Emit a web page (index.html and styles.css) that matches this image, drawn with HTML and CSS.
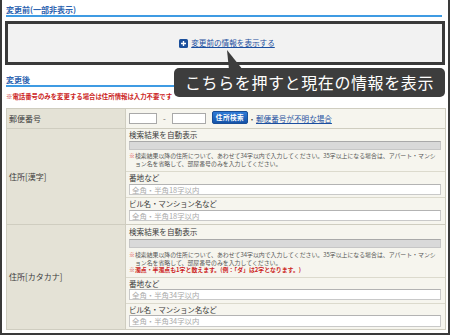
FILE: index.html
```html
<!DOCTYPE html>
<html lang="ja">
<head>
<meta charset="utf-8">
<title>変更フォーム</title>
<link rel="stylesheet" href="styles.css">
</head>
<body>
<div class="frame">
  <h2 class="sec">変更前(一部非表示)</h2>
  <div class="prev-box">
    <a class="show-link" href="#"><svg class="plus" width="9" height="9" viewBox="0 0 9 9"><rect width="9" height="9" rx="1.5" fill="#1b4f9b"/><path d="M4.5 2v5M2 4.5h5" stroke="#fff" stroke-width="1.4"/></svg><span class="show-text">変更前の情報を表示する</span></a>
  </div>
  <h2 class="sec sec-after">変更後</h2>
  <p class="warn">※電話番号のみを変更する場合は住所情報は入力不要です</p>
  <table class="form">
    <colgroup><col class="c1"><col></colgroup>
    <tr>
      <td class="label">郵便番号</td>
      <td class="val">
        <div class="zip">
          <input class="zin z1" type="text"><span class="dash">-</span><input class="zin z2" type="text"><button class="zbtn" type="button">住所検索</button><span class="dot">・</span><a class="zlink" href="#">郵便番号が不明な場合</a>
        </div>
      </td>
    </tr>
    <tr>
      <td class="label">住所[漢字]</td>
      <td class="val">
        <div class="sub s-auto">
          <div class="cap">検索結果を自動表示</div>
          <div class="bar"></div>
          <div class="note"><span class="ln"><span class="mk">※</span>検索結果以降の住所について、あわせて34字以内で入力してください。35字以上になる場合は、アパート・マンシ</span><span class="ln ln2">ョン名を省略して、部屋番号のみを入力してください。</span></div>
        </div>
        <div class="sub s-in">
          <div class="cap">番地など</div>
          <input class="txt" type="text" placeholder="全角・半角18字以内">
        </div>
        <div class="sub s-in s-last">
          <div class="cap cap-bld">ビル名・マンション名など</div>
          <input class="txt" type="text" placeholder="全角・半角18字以内">
        </div>
      </td>
    </tr>
    <tr>
      <td class="label">住所[カタカナ]</td>
      <td class="val">
        <div class="sub s-auto2">
          <div class="cap">検索結果を自動表示</div>
          <div class="bar"></div>
          <div class="note note3"><span class="ln"><span class="mk">※</span>検索結果以降の住所について、あわせて34字以内で入力してください。35字以上になる場合は、アパート・マンシ</span><span class="ln ln2">ョン名を省略して、部屋番号のみを入力してください。</span><span class="ln red">※濁点・半濁点も1字と数えます。(例：「ダ」は2字となります。)</span></div>
        </div>
        <div class="sub s-in2">
          <div class="cap">番地など</div>
          <input class="txt" type="text" placeholder="全角・半角34字以内">
        </div>
        <div class="sub s-in3">
          <div class="cap cap-bld">ビル名・マンション名など</div>
          <input class="txt txt-tall" type="text" placeholder="全角・半角34字以内">
        </div>
      </td>
    </tr>
  </table>

  <svg class="tip-arrow" width="18" height="20" viewBox="0 0 18 20"><polygon points="1,0 3,20 17,20" fill="#3d3d3d"/></svg>
  <div class="tip">こちらを押すと現在の情報を表示</div>
</div>
</body>
</html>
```
FILE: styles.css
```css
* { box-sizing: border-box; }
html, body { margin: 0; padding: 0; background: #fff; }
body {
  width: 450px;
  height: 335px;
  overflow: hidden;
  font-family: "Noto Sans CJK JP", "Noto Sans", sans-serif;
  color: #444;
}
.frame {
  position: relative;
  height: 335px;
  border-left: 2px solid #3a3a3a;
  border-right: 2px solid #3a3a3a;
  border-bottom: 2px solid #3a3a3a;
  padding: 0 2px 0 4px;
  overflow: hidden;
}
.sec {
  margin: 0;
  padding-top: 5px;
  font-size: 8px;
  line-height: 10px;
  font-weight: bold;
  color: #2c63b0;
  border-bottom: 2px solid #3f9be3;
  margin-right: 4px;
}
.sec-after { padding-top: 10px; }
.prev-box {
  margin: 4px 1px 0 -1px;
  height: 44px;
  border: 3px solid #3a3a3a;
  background: #f2f2f2;
  display: flex;
  align-items: center;
  justify-content: center;
  padding-left: 4px;
}
.show-link {
  display: flex;
  align-items: center;
  gap: 3px;
  color: #1c4fa0;
  text-decoration: none;
}
.show-text {
  font-size: 7.6px;
  line-height: 10px;
  text-decoration: underline;
}
.warn {
  margin: 5px 0 0;
  font-size: 6.4px;
  line-height: 9px;
  height: 9px;
  font-weight: bold;
  color: #cc1f1f;
  white-space: nowrap;
}
.form {
  margin-top: 7px;
  width: 100%;
  border-collapse: collapse;
  table-layout: fixed;
}
.c1 { width: 119px; }
.form td {
  border: 1px solid #cfcdc0;
  padding: 0;
  vertical-align: middle;
}
.label {
  background: #e4e2d6;
  font-size: 8px;
  line-height: 10px;
  padding-left: 2px !important;
  color: #3c3c3c;
  white-space: nowrap;
}
.val { background: #f6f5ee; }
.zip {
  height: 19px;
  display: flex;
  align-items: center;
  padding-left: 3px;
}
.zin {
  height: 11px;
  border: 1px solid #a9a9a9;
  background: #fff;
  padding: 0;
  margin: 0;
}
.z1 { width: 28px; }
.z2 { width: 34px; }
.dash {
  width: 15px;
  text-align: center;
  font-size: 8px;
  color: #666;
}
.zbtn {
  margin: 0 0 3px 6px;
  width: 36px;
  height: 13px;
  padding: 0;
  font-family: "Noto Sans CJK JP", sans-serif;
  font-size: 6.6px;
  font-weight: bold;
  letter-spacing: 0.5px;
  line-height: 11px;
  color: #fff;
  background: linear-gradient(#2f7ad6, #1553a8);
  border: 1px solid #1a4e96;
  border-radius: 2px;
}
.dot {
  width: 8px;
  text-align: center;
  font-size: 7px;
  color: #333;
}
.zlink {
  font-size: 7.6px;
  color: #1c4fa0;
  text-decoration: underline;
  white-space: nowrap;
}
.sub {
  padding: 0 4px 0 3px;
  border-top: 1px solid #dcdacd;
}
.sub:first-child { border-top: none; }
.cap {
  font-size: 7.6px;
  line-height: 10px;
  height: 10px;
  color: #3c3c3c;
  white-space: nowrap;
}
.cap-bld { letter-spacing: -0.3px; }
.bar {
  height: 9px;
  background: #d9d9d9;
  border: 1px solid #c6c6c6;
  border-top-color: #a9a9a9;
}
.note {
  font-size: 5.9px;
  line-height: 7.5px;
  color: #555;
  white-space: nowrap;
  overflow: hidden;
}
.ln { display: block; }
.ln2 { padding-left: 1em; }
.mk { color: #d22; }
.red { color: #cc1f1f; font-weight: bold; }
.txt {
  display: block;
  width: 100%;
  height: 11px;
  margin: 0;
  border: 1px solid #c9c9c9;
  border-top-color: #b3b3b3;
  background: #fff;
  font-family: "Noto Sans CJK JP", sans-serif;
  font-size: 7.4px;
  padding: 0 2px;
}
.txt::placeholder { color: #a9a9a9; }
.txt-tall { height: 12px; }

.s-auto { padding-top: 1px; padding-bottom: 4px; }
.s-auto .bar { margin-top: 1px; }
.s-auto .note { margin-top: 2px; }
.s-in { padding-top: 1px; padding-bottom: 2px; }
.s-in .txt { margin-top: 1px; }
.s-last { padding-bottom: 3px; }

.s-auto2 { padding-top: 2px; padding-bottom: 3px; }
.s-auto2 .bar { margin-top: 2px; }
.s-auto2 .note { margin-top: 3px; line-height: 7.5px; }
.s-in2 { padding-top: 1px; padding-bottom: 3px; }
.s-in3 { padding-top: 1px; padding-bottom: 2px; }

.tip {
  position: absolute;
  left: 172px;
  top: 68px;
  width: 271px;
  height: 29px;
  background: #3d3d3d;
  border-radius: 5px;
  color: #fff;
  font-size: 16px;
  letter-spacing: 0.6px;
  line-height: 29px;
  padding-left: 11px;
  white-space: nowrap;
}
.tip-arrow {
  position: absolute;
  left: 224px;
  top: 50px;
  display: block;
}
```
